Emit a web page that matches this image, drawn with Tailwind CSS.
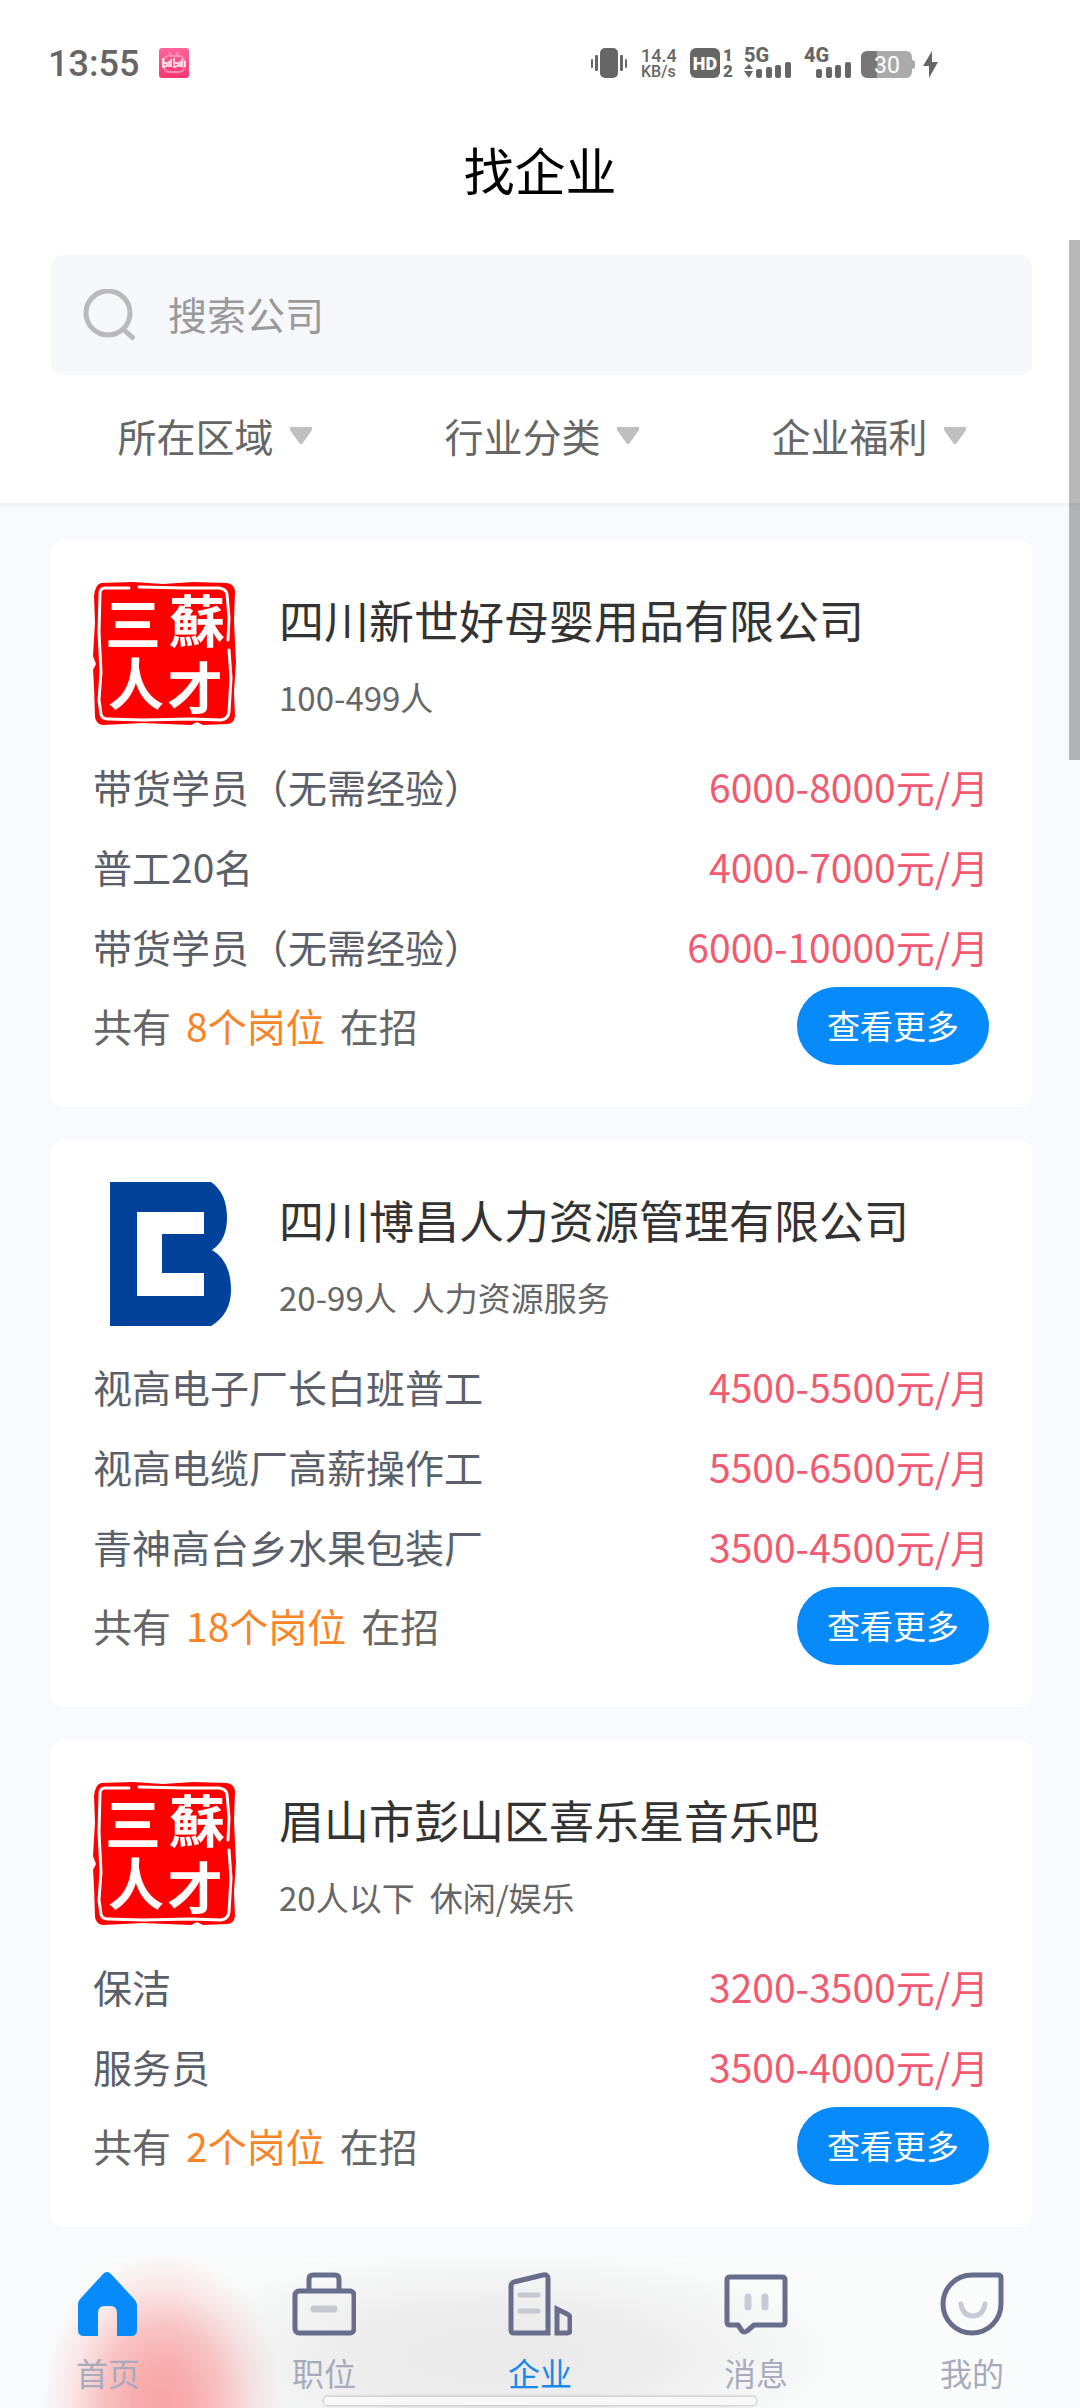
<!DOCTYPE html>
<html lang="zh-CN">
  <head>
    <meta charset="UTF-8" />
    <meta name="viewport" content="width=device-width, initial-scale=1.0" />
    <title>找企业</title>
    <script src="https://cdn.jsdelivr.net/npm/@tailwindcss/browser@4"></script>
  </head>
  <body class="bg-[#f7f9fd] font-['Noto_Sans_CJK_SC',sans-serif] text-[39px] text-[#666]">
    <!-- shared logo -->
    <svg class="hidden" aria-hidden="true">
      <symbol id="seal" viewBox="0 0 144 144">
        <path d="M8 1 L40 0 L70 2 L100 0 L134 1 Q141 2 142 9 L141 40 L143 80 L141 110 L142 134 Q141 142 134 142 L110 143 L104 140 L98 143 L50 141 L10 143 Q3 142 2 135 L1 104 L0 88 L3 82 L0 74 L2 40 L1 14 Q2 3 8 1Z" fill="#fe0000" />
        <path d="M36 6 L12 6 Q7 6 7 12 L6 50 L8 90 L6 118 L8 132 Q9 137 15 137 L50 138 L98 137 L128 138 Q135 137 136 130 L138 96 L136 68 M135 58 L136 36 L134 12 Q133 7 126 6 L90 6 L46 5" fill="none" stroke="#fff" stroke-width="3" stroke-linecap="round" stroke-linejoin="round" />
        <g fill="#fff" font-family="'Noto Sans CJK TC', 'Noto Sans CJK SC', sans-serif" font-weight="700" font-size="56" text-anchor="middle">
          <text x="40" y="63">三</text>
          <text x="104" y="60">蘇</text>
          <text x="43" y="123">人</text>
          <text x="102" y="127">才</text>
        </g>
      </symbol>
    </svg>

    <div class="relative flex min-h-screen flex-col">
      <header class="border-b-[3px] border-[#f2f2f2] bg-white pt-10">
        <!-- status bar -->
        <div class="flex h-[46px] items-center pl-12 font-[Roboto,sans-serif] text-[#666]">
          <span class="pt-[2px] text-[36px] leading-[46px] font-medium">13:55</span>
          <svg class="ml-5 h-[30px] w-[30px]" viewBox="0 0 30 30">
            <defs>
              <linearGradient id="pink" x2="0" y2="1"><stop stop-color="#ff6699" /><stop offset="1" stop-color="#fb3572" /></linearGradient>
            </defs>
            <rect width="30" height="30" rx="3" fill="url(#pink)" />
            <rect x="5" y="8" width="20" height="16" rx="5" fill="none" stroke="#ff8fb4" stroke-width="2" />
            <path d="M10 4l2 4M19 4l-2 4" stroke="#ff8fb4" stroke-width="2" />
            <path d="M4 10v9l4-1v-3l-3 0M10 13v6M12 11v8M15 10v9l4-1v-3l-3 0M21 13v6M23 11v8M26 13v6" fill="none" stroke="#fff" stroke-width="1.5" />
          </svg>
          <div class="ml-auto flex items-center pr-[142px]">
            <svg class="h-[30px] w-9" viewBox="0 0 36 30" fill="#666">
              <rect x="9" width="18" height="30" rx="5" />
              <rect y="11" width="2" height="9" rx="1" /><rect x="4" y="7" width="3" height="16" rx="1" />
              <rect x="29" y="7" width="3" height="16" rx="1" /><rect x="34" y="11" width="2" height="9" rx="1" />
            </svg>
            <div class="ml-[14px] w-9 pt-[2px] text-[16px] leading-4 font-medium">
              <div class="text-[18px]">14.4</div>
              <div>KB/s</div>
            </div>
            <svg class="ml-[13px] h-[30px] w-8 overflow-visible" viewBox="0 0 32 30" fill="#666">
              <rect width="30" height="30" rx="6" />
              <text x="15" y="22" fill="#fff" font-size="18" font-weight="900" text-anchor="middle">HD</text>
            </svg>
            <div class="w-3 text-center text-[17px] leading-4 font-black">
              <div>1</div>
              <div>2</div>
            </div>
            <svg class="ml-[10px] h-10 w-12" viewBox="0 -6 48 40" fill="#666">
              <text x="0" y="13" font-size="20" font-weight="800">5G</text>
              <path d="M0 20h9l-4-5zM0 22h9l-4 7z" />
              <rect x="12" y="20" width="6" height="9" rx="2" /><rect x="22" y="18" width="6" height="11" rx="2" />
              <rect x="31" y="16" width="6" height="13" rx="2" /><rect x="41" y="13" width="6" height="16" rx="2" />
            </svg>
            <svg class="ml-3 h-10 w-12" viewBox="0 -6 48 40" fill="#666">
              <text x="0" y="13" font-size="20" font-weight="800">4G</text>
              <rect x="12" y="20" width="6" height="9" rx="2" /><rect x="22" y="18" width="6" height="11" rx="2" />
              <rect x="31" y="16" width="6" height="13" rx="2" /><rect x="41" y="13" width="6" height="16" rx="2" />
            </svg>
            <svg class="ml-[9px] h-[30px] w-[54px]" viewBox="0 0 54 30">
              <path d="M7 3h38q6 0 6 7v2q3 0 3 2v4q0 3-3 3v2q0 7-6 7H7q-7 0-7-7V10q0-7 7-7z" fill="#aaa" />
              <path d="M16 3H7q-7 0-7 7v13q0 7 7 7h9z" fill="#777" />
              <text x="26" y="25" fill="#fff" font-size="23" text-anchor="middle">30</text>
            </svg>
            <svg class="ml-2 h-[30px] w-[15px]" viewBox="0 0 15 30" fill="#666"><path d="M9 3L0 18h6v12l9-16H9z" /></svg>
          </div>
        </div>

        <h1 class="mt-12 text-center text-[51px] leading-[70px] text-black">找企业</h1>

        <label class="mt-[51px] mr-12 ml-[51px] flex h-[120px] items-center rounded-xl bg-[#f5f7fb] px-8">
          <svg class="h-[52px] w-[52px] shrink-0" viewBox="0 0 52 52" fill="none" stroke="#b9b9b9" stroke-width="5">
            <circle cx="25" cy="24" r="22" /><path d="M40 40l11 10" />
          </svg>
          <input type="text" placeholder="搜索公司" aria-label="搜索公司" class="ml-[33px] w-full bg-transparent pb-1 placeholder-[#999] focus:outline-none" />
        </label>

        <div class="mr-12 ml-[51px] grid h-32 grid-cols-3 pb-2">
          <div class="flex items-center justify-center gap-[15px]">
            <select aria-label="所在区域" class="appearance-none bg-transparent focus:outline-none"><option>所在区域</option></select>
            <svg class="h-[18px] w-[22px]" viewBox="0 0 22 18" fill="#bfbfbf"><path d="M0 1h22v3L12 18h-2L0 4z" /></svg>
          </div>
          <div class="flex items-center justify-center gap-[15px]">
            <select aria-label="行业分类" class="appearance-none bg-transparent focus:outline-none"><option>行业分类</option></select>
            <svg class="h-[18px] w-[22px]" viewBox="0 0 22 18" fill="#bfbfbf"><path d="M0 1h22v3L12 18h-2L0 4z" /></svg>
          </div>
          <div class="flex items-center justify-center gap-[15px]">
            <select aria-label="企业福利" class="appearance-none bg-transparent focus:outline-none"><option>企业福利</option></select>
            <svg class="h-[18px] w-[22px]" viewBox="0 0 22 18" fill="#bfbfbf"><path d="M0 1h22v3L12 18h-2L0 4z" /></svg>
          </div>
        </div>
      </header>

      <!-- company list -->
      <main class="flex flex-col gap-[33px] pt-[34px] pr-12 pb-[31px] pl-[51px]">
        <article class="rounded-xl bg-white pt-[42px] pr-[43px] pb-[39px] pl-[42px]">
          <div class="mb-5 flex gap-[42px]">
            <svg class="h-36 w-36 shrink-0"><use href="#seal" /></svg>
            <div class="pt-2">
              <h2 class="text-[45px] leading-[60px] text-[#333]">四川新世好母婴用品有限公司</h2>
              <p class="mt-[23px] flex gap-[15px] text-[33px] leading-[48px]">100-499人</p>
            </div>
          </div>
          <ul class="leading-[80px] text-[#5a6069]">
            <li class="flex justify-between"><span>带货学员（无需经验）</span><span class="text-[#f05b72]">6000-8000元/月</span></li>
            <li class="flex justify-between"><span>普工20名</span><span class="text-[#f05b72]">4000-7000元/月</span></li>
            <li class="flex justify-between"><span>带货学员（无需经验）</span><span class="text-[#f05b72]">6000-10000元/月</span></li>
          </ul>
          <div class="flex items-start justify-between pb-[3px] leading-[78px]">
            <p class="flex gap-[15px]">共有 <span class="text-[#f98428]">8个岗位</span> 在招</p>
            <button type="button" class="mt-px h-[78px] w-48 rounded-full bg-[#078bfa] pb-[2px] text-[33px] leading-[76px] text-white">查看更多</button>
          </div>
        </article>

        <article class="rounded-xl bg-white pt-[42px] pr-[43px] pb-[39px] pl-[42px]">
          <div class="mb-5 flex gap-[42px]">
            <svg class="h-36 w-36 shrink-0" viewBox="0 0 144 144">
              <path d="M17 0H118Q134 11 134 36Q134 58 119 68Q138 79 138 108Q138 132 118 144H17Z" fill="#02429a" />
              <path d="M44 30h67v22H69v39h42v23H44z" fill="#fff" />
            </svg>
            <div class="pt-2">
              <h2 class="text-[45px] leading-[60px] text-[#333]">四川博昌人力资源管理有限公司</h2>
              <p class="mt-[23px] flex gap-[15px] text-[33px] leading-[48px]"><span>20-99人</span><span>人力资源服务</span></p>
            </div>
          </div>
          <ul class="leading-[80px] text-[#5a6069]">
            <li class="flex justify-between"><span>视高电子厂长白班普工</span><span class="text-[#f05b72]">4500-5500元/月</span></li>
            <li class="flex justify-between"><span>视高电缆厂高薪操作工</span><span class="text-[#f05b72]">5500-6500元/月</span></li>
            <li class="flex justify-between"><span>青神高台乡水果包装厂</span><span class="text-[#f05b72]">3500-4500元/月</span></li>
          </ul>
          <div class="flex items-start justify-between pb-[3px] leading-[78px]">
            <p class="flex gap-[15px]">共有 <span class="text-[#f98428]">18个岗位</span> 在招</p>
            <button type="button" class="mt-px h-[78px] w-48 rounded-full bg-[#078bfa] pb-[2px] text-[33px] leading-[76px] text-white">查看更多</button>
          </div>
        </article>

        <article class="rounded-xl bg-white pt-[42px] pr-[43px] pb-[39px] pl-[42px]">
          <div class="mb-5 flex gap-[42px]">
            <svg class="h-36 w-36 shrink-0"><use href="#seal" /></svg>
            <div class="pt-2">
              <h2 class="text-[45px] leading-[60px] text-[#333]">眉山市彭山区喜乐星音乐吧</h2>
              <p class="mt-[23px] flex gap-[15px] text-[33px] leading-[48px]"><span>20人以下</span><span>休闲/娱乐</span></p>
            </div>
          </div>
          <ul class="leading-[80px] text-[#5a6069]">
            <li class="flex justify-between"><span>保洁</span><span class="text-[#f05b72]">3200-3500元/月</span></li>
            <li class="flex justify-between"><span>服务员</span><span class="text-[#f05b72]">3500-4000元/月</span></li>
          </ul>
          <div class="flex items-start justify-between pb-[3px] leading-[78px]">
            <p class="flex gap-[15px]">共有 <span class="text-[#f98428]">2个岗位</span> 在招</p>
            <button type="button" class="mt-px h-[78px] w-48 rounded-full bg-[#078bfa] pb-[2px] text-[33px] leading-[76px] text-white">查看更多</button>
          </div>
        </article>
      </main>

      <nav class="relative mt-auto grid h-[150px] grid-cols-5 overflow-hidden bg-[#fafbfb] bg-[radial-gradient(ellipse_120px_150px_at_15%_96%,#f8a5a5_0%,#f8a5a5e6_25%,#f8a5a5a6_50%,#f8a5a540_75%,#f8a5a500_100%),radial-gradient(ellipse_360px_110px_at_46%_65%,#e9e9e9_0%,#eaeaeacc_45%,#eeeeee00_100%),linear-gradient(90deg,#f7f9fd_0%,#fafbfb_8%,#fafbfb_92%,#f7f9fd_100%)] pt-[14px] text-[32px] leading-[48px] text-[#a7abbd]">
        <a href="#" class="flex flex-col items-center gap-3">
          <svg class="h-16 w-16" viewBox="0 0 64 64"><path d="M27 2q4-4 8 0l24 26q2 3 2 6v24q0 6-6 6H41V41q0-7-7-7h-5q-7 0-7 7v23H8q-6 0-6-6V32q0-3 3-6z" fill="#078bfa" /></svg>
          首页
        </a>
        <a href="#" class="flex flex-col items-center gap-3">
          <svg class="h-16 w-16" viewBox="0 0 64 64" fill="none" stroke="#696d8c" stroke-width="5">
            <rect x="3" y="19" width="59" height="42" rx="4" /><path d="M17 19V7q0-4 4-4h22q4 0 4 4v12" />
            <path d="M22 37h20" stroke="#c5c7d3" stroke-width="7" stroke-linecap="round" />
          </svg>
          职位
        </a>
        <a href="#" class="flex flex-col items-center gap-3 text-[#1989e8]" aria-current="page">
          <svg class="h-16 w-16" viewBox="0 0 64 64" fill="none" stroke="#696d8c" stroke-width="5">
            <path d="M40 61H6q-3 0-3-3V14q0-3 3-4L35 3q5-1 5 4zM49 61V37l10 5q3 1 3 4v12q0 3-3 3z" />
            <path d="M12 23h18M12 39h18" stroke="#c5c7d3" stroke-linecap="round" />
          </svg>
          企业
        </a>
        <a href="#" class="flex flex-col items-center gap-3">
          <svg class="h-16 w-16" viewBox="0 0 64 64" fill="none" stroke="#696d8c" stroke-width="5" stroke-linejoin="round">
            <path d="M6 5h52q3 0 3 3v42q0 3-3 3H30l-7 6q-3 2-5 0l-4-6H6q-3 0-3-3V8q0-3 3-3z" />
            <path d="M24 25v10M41 25v10" stroke="#c9cad6" stroke-width="7" stroke-linecap="round" />
          </svg>
          消息
        </a>
        <a href="#" class="flex flex-col items-center gap-3">
          <svg class="h-16 w-16" viewBox="0 0 64 64" fill="none" stroke="#696d8c" stroke-width="5">
            <path d="M32 3h26q3 0 3 3v26A29 29 0 1 1 32 3z" />
            <path d="M21 32q2 12 12 12t12-12" stroke="#c9cad6" stroke-linecap="round" />
          </svg>
          我的
        </a>
        <div class="absolute bottom-[3px] left-[30%] h-2 w-[40%] rounded-full bg-[#f8f8f8] shadow-[0_0_3px_1px_#c4c4c4]"></div>
      </nav>

      <!-- scroll indicator -->
      <div class="absolute top-[240px] right-0 h-[520px] w-[11px] bg-black/28"></div>
    </div>
  </body>
</html>
